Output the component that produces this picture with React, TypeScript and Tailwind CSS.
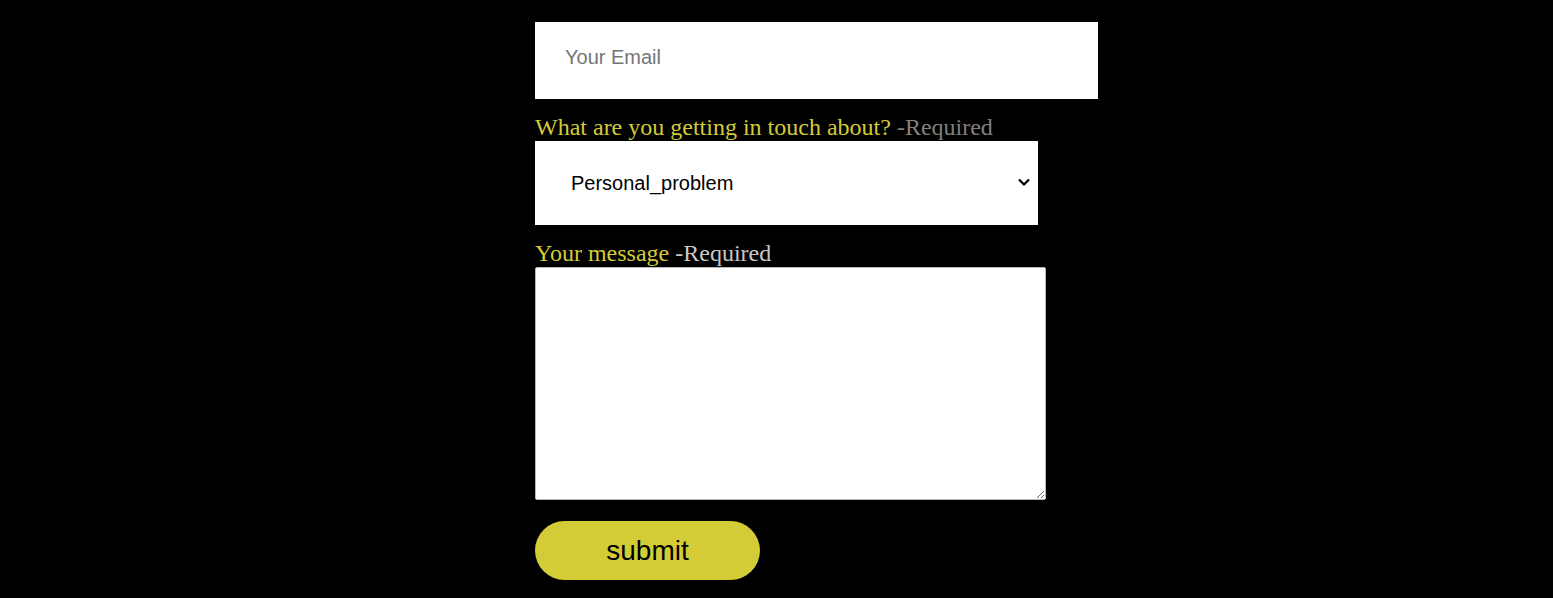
export default function App() {
  return (
    <div className="min-h-[598px] bg-black pt-[22px]">
      <form className="ml-[535px] flex flex-col items-start">
        <input
          type="email"
          placeholder="Your Email"
          className="w-[563px] h-[77px] bg-white px-[30px] pb-[6px] text-[20px] text-black placeholder:text-[#757575] outline-none"
          style={{ fontFamily: 'Arial, "Liberation Sans", sans-serif' }}
        />
        <label
          className="mt-[15px] text-[24px] leading-[27px] text-[#d4cc36]"
          style={{ fontFamily: '"Times New Roman", "Liberation Serif", serif' }}
        >
          What are you getting in touch about? <span className="text-[#808080]">-Required</span>
        </label>
        <div className="relative w-[503px] h-[84px]">
          <select
            defaultValue="Personal_problem"
            className="w-full h-full appearance-none bg-white pl-[36px] pr-[30px] text-[20px] text-black outline-none"
            style={{ fontFamily: 'Arial, "Liberation Sans", sans-serif' }}
          >
            <option value="Personal_problem">Personal_problem</option>
            <option value="Work">Work</option>
            <option value="Other">Other</option>
          </select>
          <svg
            className="pointer-events-none absolute right-[7px] top-[36px]"
            width="14"
            height="10"
            viewBox="0 0 14 10"
          >
            <path d="M2 2.5 L7 7.5 L12 2.5" fill="none" stroke="#000" strokeWidth="2.2" />
          </svg>
        </div>
        <label
          className="mt-[15px] text-[24px] leading-[27px] text-[#d4cc36]"
          style={{ fontFamily: '"Times New Roman", "Liberation Serif", serif' }}
        >
          Your message <span className="text-[#c8c8c8]">-Required</span>
        </label>
        <textarea className="w-[511px] h-[233px] bg-white border border-[#b8b8b8] rounded-[2px] outline-none" />
        <button
          type="button"
          className="mt-[21px] w-[225px] h-[59px] rounded-full bg-[#d4cc36] text-[28px] text-black"
          style={{ fontFamily: 'Arial, "Liberation Sans", sans-serif' }}
        >
          submit
        </button>
      </form>
    </div>
  );
}
